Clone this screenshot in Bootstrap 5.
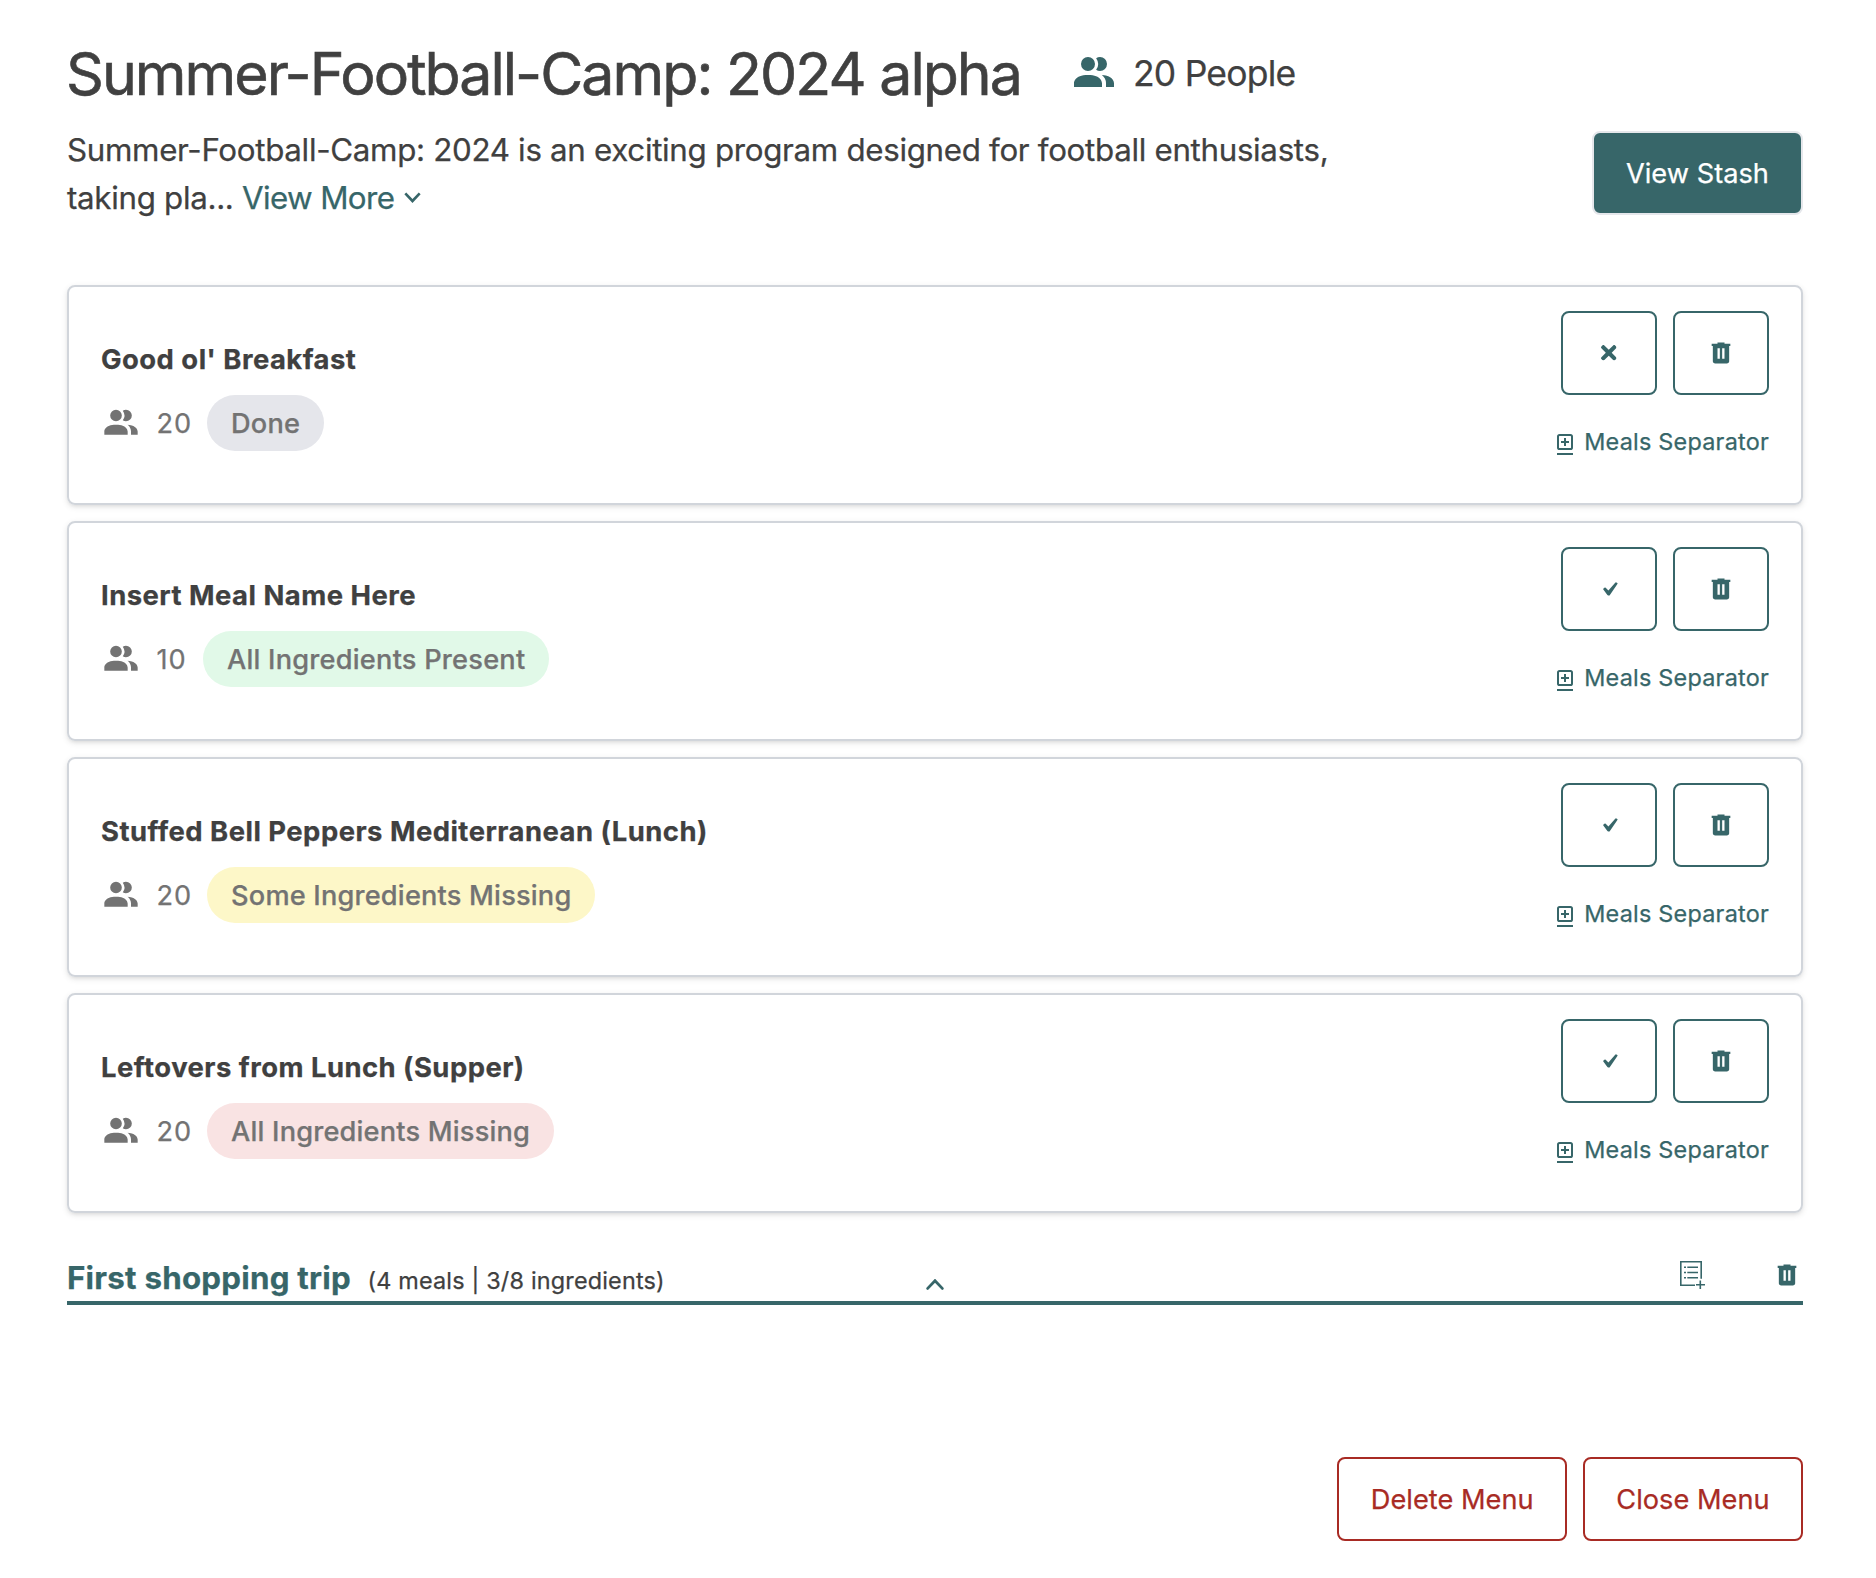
<!DOCTYPE html>
<html lang="en">
<head>
<meta charset="utf-8">
<meta name="viewport" content="width=device-width, initial-scale=1">
<title>Summer-Football-Camp: 2024 alpha</title>
<link href="https://cdn.jsdelivr.net/npm/bootstrap@5.3.0/dist/css/bootstrap.min.css" rel="stylesheet">
<style>
  :root { --teal: #376669; --ink: #404040; --muted: #737373; --danger: #a82b24; }
  body { font-family: Inter, "Liberation Sans", sans-serif; color: var(--ink); background: #fff; -webkit-text-stroke: .25px; }
  svg { display: block; flex: none; fill: currentColor; }
  .page { padding: 38px 73px 0 67px; }
  .teal { color: var(--teal); }

  .menu-title { font-size: 59px; line-height: 72px; letter-spacing: -1.963px; font-weight: 400; margin-left: -1px; -webkit-text-stroke: .6px; }
  .people-icon { margin: 0 15px 2px 49px; }
  .people-count { font-size: 35.5px; letter-spacing: -.79px; }
  .menu-intro { margin-top: 15.5px; height: 96px; }
  .menu-text { font-size: 31.3px; line-height: 48px; letter-spacing: -.31px; width: 1340px; }
  .more-link { letter-spacing: -.62px; color: var(--teal); text-decoration: none; }
  .more-link svg { display: inline-block; margin-left: 10px; vertical-align: 6px; }

  .btn { font-size: 27.2px; line-height: 40px; border-width: 2px; border-radius: 8px; padding: 21px 31.3px 19px; }
  .btn-stash { --bs-btn-bg: var(--teal); --bs-btn-color: #fff; --bs-btn-border-color: #e5e7eb; margin-top: 5px; padding: 21px 32px 19px; letter-spacing: .035px; --bs-btn-hover-bg: #2c5456; --bs-btn-hover-color: #fff; }
  .btn-square { --bs-btn-color: var(--teal); --bs-btn-border-color: var(--teal); --bs-btn-hover-color: var(--teal); --bs-btn-hover-border-color: var(--teal); width: 96px; height: 84px; padding: 0; }
  .btn-end { --bs-btn-color: var(--danger); --bs-btn-border-color: var(--danger); --bs-btn-hover-color: #fff; --bs-btn-hover-bg: var(--danger); letter-spacing: .03px; }

  .meal-list { margin-top: 63.5px; gap: 16px; }
  .meal { height: 220px; border: 2px solid #d1d5db; border-radius: 8px; padding: 24px 32px; box-shadow: 0 2px 6px rgba(0,0,0,.1), 0 2px 4px -2px rgba(0,0,0,.1); }
  .meal-info { padding-top: 28px; }
  .meal-name { font-size: 27.4px; line-height: 40px; font-weight: 700; letter-spacing: .49px; margin-bottom: 16px; }
  .meal-meta { font-size: 27.2px; line-height: 40px; color: var(--muted); }
  .meal-count { margin: 2px 15px 0 15.5px; min-width: 31.5px; letter-spacing: .9px; }
  .status { height: 56px; line-height: 58px; padding: 0 24px; font-weight: 500; letter-spacing: .19px; }
  .status-done { background: #e5e6eb; }
  .status-present { background: #e1f9e8; letter-spacing: .22px; }
  .status-some { background: #fdf7c8; }
  .status-missing { background: #f9e3e3; }
  .separator-link { margin-top: 28px; gap: 11px; font-size: 23.4px; line-height: 37px; letter-spacing: .24px; color: var(--teal); text-decoration: none; }
  .separator-link svg { margin-top: 7px; }
  .icon-check { margin-left: 2px; }

  .trip { margin-top: 40px; height: 52px; border-bottom: 4px solid var(--teal); }
  .trip-side { flex: 1 1 0; }
  .trip-heading { padding-top: 2px; }
  .trip-name { font-size: 31.3px; line-height: 48px; font-weight: 700; letter-spacing: .235px; margin-right: 16.5px; }
  .trip-note { font-size: 23.4px; letter-spacing: .193px; }
  .trip-toggle { margin: 15px -1px 0 1px; }
  .trip-actions { gap: 68px; padding-right: 2px; margin-top: -5px; }
  .menu-end { margin-top: 152px; }
</style>
</head>
<body>
<svg class="d-none">
  <symbol id="people" viewBox="0 0 24 24"><path d="M16 17v2H2v-2s0-4 7-4 7 4 7 4m-3.5-9.5A3.5 3.5 0 1 0 9 11a3.5 3.5 0 0 0 3.5-3.5m3.44 5.5A5.32 5.32 0 0 1 18 17v2h4v-2s0-3.63-6.06-4M15 4a3.39 3.39 0 0 0-1.93.59 5 5 0 0 1 0 5.82A3.39 3.39 0 0 0 15 11a3.5 3.5 0 0 0 0-7z"/></symbol>
  <symbol id="trash" viewBox="0 -960 960 960"><path d="M280-120q-33 0-56.5-23.5T200-200v-520h-40v-80h200v-40h240v40h200v80h-40v520q0 33-23.5 56.5T680-120H280Zm80-160h80v-360h-80v360Zm160 0h80v-360h-80v360Z"/></symbol>
  <symbol id="cross" viewBox="0 80 352 352"><path d="M242.72 256l100.07-100.07c12.28-12.28 12.28-32.19 0-44.48l-22.24-22.24c-12.28-12.28-32.19-12.28-44.48 0L176 189.28 75.93 89.21c-12.28-12.28-32.19-12.28-44.48 0L9.21 111.45c-12.28 12.28-12.28 32.19 0 44.48L109.28 256 9.21 356.07c-12.28 12.28-12.28 32.19 0 44.48l22.24 22.24c12.28 12.28 32.2 12.28 44.48 0L176 322.72l100.07 100.07c12.28 12.28 32.2 12.28 44.48 0l22.24-22.24c12.28-12.28 12.28-32.19 0-44.48L242.72 256z"/></symbol>
  <symbol id="check" viewBox="0 0 15 14"><path d="M.3 7.6Q0 7 .5 6.6L1.8 5.6Q2.3 5.3 2.7 5.8L5.4 8.6 12.2.7Q12.8 0 13.4.4L14.3 1Q14.9 1.5 14.4 2.1L6.9 12.9Q6.6 13.4 6 13.4H5.2Q4.7 13.4 4.4 13Z"/></symbol>
  <symbol id="separator" viewBox="0 0 16 22"><rect x="1" y="1" width="14" height="14" rx="1.6" fill="none" stroke="currentColor" stroke-width="2"/><path d="M7 4h2v3h3v2H9v3H7V9H4V7h3zM0 19h16v2H0z"/></symbol>
</svg>

<main class="page">
  <header>
    <div class="d-flex align-items-center">
      <h1 class="menu-title mb-0">Summer-Football-Camp: 2024 alpha</h1>
      <svg class="people-icon teal" width="48" height="48"><use href="#people"/></svg>
      <span class="people-count">20 People</span>
    </div>
    <div class="menu-intro d-flex justify-content-between align-items-start">
      <p class="menu-text mb-0">Summer-Football-Camp: 2024 is an exciting program designed for football enthusiasts, taking pla... <a href="#" class="more-link">View More<svg width="17" height="11" viewBox="0 0 17 11"><path d="M1.3 1.3 8.5 9 15.7 1.3" fill="none" stroke="currentColor" stroke-width="2.6"/></svg></a></p>
      <button type="button" class="btn btn-stash">View Stash</button>
    </div>
  </header>

  <section class="meal-list d-flex flex-column">
    <article class="meal d-flex justify-content-between">
      <div class="meal-info">
        <h2 class="meal-name">Good ol' Breakfast</h2>
        <div class="meal-meta d-flex align-items-center"><svg width="40" height="40"><use href="#people"/></svg><span class="meal-count">20</span><span class="status status-done rounded-pill">Done</span></div>
      </div>
      <div class="d-flex flex-column align-items-end">
        <div class="d-flex gap-3">
          <button type="button" class="btn btn-square d-flex align-items-center justify-content-center" aria-label="Undo"><svg width="15.5" height="15.5"><use href="#cross"/></svg></button>
          <button type="button" class="btn btn-square d-flex align-items-center justify-content-center" aria-label="Delete"><svg width="28" height="28"><use href="#trash"/></svg></button>
        </div>
        <a href="#" class="separator-link d-flex align-items-center"><svg width="16" height="22"><use href="#separator"/></svg>Meals Separator</a>
      </div>
    </article>

    <article class="meal d-flex justify-content-between">
      <div class="meal-info">
        <h2 class="meal-name">Insert Meal Name Here</h2>
        <div class="meal-meta d-flex align-items-center"><svg width="40" height="40"><use href="#people"/></svg><span class="meal-count">10</span><span class="status status-present rounded-pill">All Ingredients Present</span></div>
      </div>
      <div class="d-flex flex-column align-items-end">
        <div class="d-flex gap-3">
          <button type="button" class="btn btn-square d-flex align-items-center justify-content-center" aria-label="Done"><svg class="icon-check" width="15" height="14"><use href="#check"/></svg></button>
          <button type="button" class="btn btn-square d-flex align-items-center justify-content-center" aria-label="Delete"><svg width="28" height="28"><use href="#trash"/></svg></button>
        </div>
        <a href="#" class="separator-link d-flex align-items-center"><svg width="16" height="22"><use href="#separator"/></svg>Meals Separator</a>
      </div>
    </article>

    <article class="meal d-flex justify-content-between">
      <div class="meal-info">
        <h2 class="meal-name">Stuffed Bell Peppers Mediterranean (Lunch)</h2>
        <div class="meal-meta d-flex align-items-center"><svg width="40" height="40"><use href="#people"/></svg><span class="meal-count">20</span><span class="status status-some rounded-pill">Some Ingredients Missing</span></div>
      </div>
      <div class="d-flex flex-column align-items-end">
        <div class="d-flex gap-3">
          <button type="button" class="btn btn-square d-flex align-items-center justify-content-center" aria-label="Done"><svg class="icon-check" width="15" height="14"><use href="#check"/></svg></button>
          <button type="button" class="btn btn-square d-flex align-items-center justify-content-center" aria-label="Delete"><svg width="28" height="28"><use href="#trash"/></svg></button>
        </div>
        <a href="#" class="separator-link d-flex align-items-center"><svg width="16" height="22"><use href="#separator"/></svg>Meals Separator</a>
      </div>
    </article>

    <article class="meal d-flex justify-content-between">
      <div class="meal-info">
        <h2 class="meal-name">Leftovers from Lunch (Supper)</h2>
        <div class="meal-meta d-flex align-items-center"><svg width="40" height="40"><use href="#people"/></svg><span class="meal-count">20</span><span class="status status-missing rounded-pill">All Ingredients Missing</span></div>
      </div>
      <div class="d-flex flex-column align-items-end">
        <div class="d-flex gap-3">
          <button type="button" class="btn btn-square d-flex align-items-center justify-content-center" aria-label="Done"><svg class="icon-check" width="15" height="14"><use href="#check"/></svg></button>
          <button type="button" class="btn btn-square d-flex align-items-center justify-content-center" aria-label="Delete"><svg width="28" height="28"><use href="#trash"/></svg></button>
        </div>
        <a href="#" class="separator-link d-flex align-items-center"><svg width="16" height="22"><use href="#separator"/></svg>Meals Separator</a>
      </div>
    </article>
  </section>

  <section class="trip d-flex align-items-center">
    <div class="trip-side trip-heading d-flex align-items-baseline">
      <h2 class="trip-name teal mb-0">First shopping trip</h2>
      <span class="trip-note">(4 meals | 3/8 ingredients)</span>
    </div>
    <svg class="trip-toggle teal" width="18" height="11" viewBox="0 0 18 11"><path d="M1.7 9.4 9 1.7l7.3 7.7" fill="none" stroke="currentColor" stroke-width="2.8" stroke-linecap="round"/></svg>
    <div class="trip-side trip-actions d-flex justify-content-end align-items-center teal">
      <svg width="25" height="28" viewBox="0 0 25 28"><path d="M15 24.3H.8V.8h20.4v17M4 6.3h2m1.3 0H18M4 11.5h2m1.3 0H18M4 16.7h2m1.3 0H18M20.3 19.5V28M16 23.8h9" fill="none" stroke="currentColor" stroke-width="1.6"/></svg>
      <svg width="28" height="28"><use href="#trash"/></svg>
    </div>
  </section>

  <footer class="menu-end d-flex justify-content-end gap-3">
    <button type="button" class="btn btn-end">Delete Menu</button>
    <button type="button" class="btn btn-end">Close Menu</button>
  </footer>
</main>
<script src="https://cdn.jsdelivr.net/npm/bootstrap@5.3.0/dist/js/bootstrap.bundle.min.js"></script>
</body>
</html>
